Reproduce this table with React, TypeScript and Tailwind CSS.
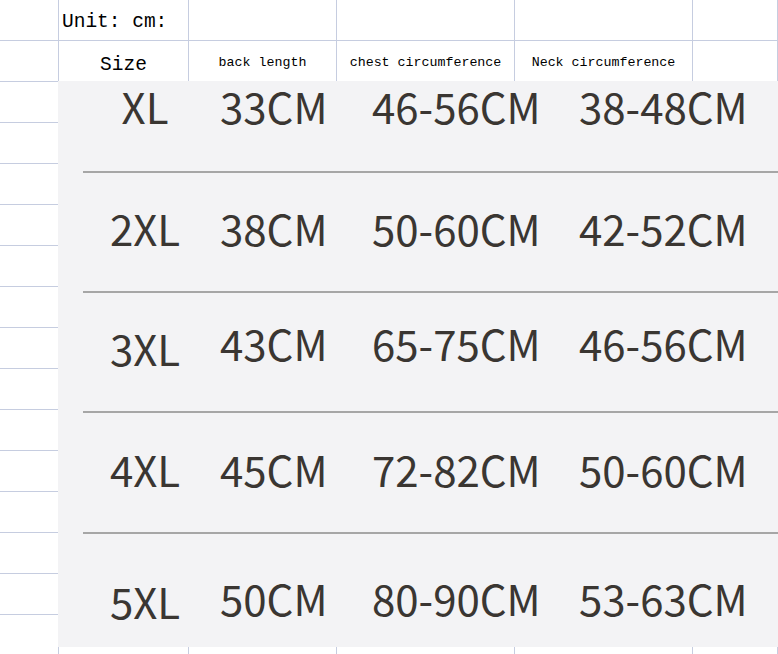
const sizes = [
  { size: "XL", back: "33CM", chest: "46-56CM", neck: "38-48CM", top: "mt-0", sizeShift: "" },
  { size: "2XL", back: "38CM", chest: "50-60CM", neck: "42-52CM", top: "mt-[30px]", sizeShift: "" },
  { size: "3XL", back: "43CM", chest: "65-75CM", neck: "46-56CM", top: "mt-[25px]", sizeShift: "translate-y-[5px]" },
  { size: "4XL", back: "45CM", chest: "72-82CM", neck: "50-60CM", top: "mt-[31px]", sizeShift: "" },
  { size: "5XL", back: "50CM", chest: "80-90CM", neck: "53-63CM", top: "mt-[39px]", sizeShift: "translate-y-[3px]" },
];

const lineGaps = ["mt-[36px]", "mt-[34px]", "mt-[39px]", "mt-[34px]"];

function SheetGrid() {
  const rows = Array.from({ length: 16 }, (_, i) => i);
  const cell = "h-[41px] border-r border-b border-[#c6cde0]";

  return (
    <div className="grid grid-cols-[59px_130px_148px_178px_178px_1fr] font-['Liberation_Mono',monospace] text-black">
      {rows.map((r) => (
        <div key={r} className="contents">
          <div className={cell} />
          <div className={`${cell} flex`}>
            {r === 0 && <span className="pl-[3px] pt-[10px] text-[19.5px] leading-[24px]">Unit: cm:</span>}
            {r === 1 && <span className="w-full pt-[12px] text-center text-[19.5px] leading-[24px]">Size</span>}
          </div>
          <div className={`${cell} flex`}>
            {r === 1 && <span className="w-full pt-[13px] text-center text-[13.3px] leading-[18px]">back length</span>}
          </div>
          <div className={`${cell} flex`}>
            {r === 1 && <span className="w-full pt-[13px] text-center text-[13.3px] leading-[18px]">chest circumference</span>}
          </div>
          <div className={`${cell} flex`}>
            {r === 1 && <span className="w-full pt-[13px] text-center text-[13.3px] leading-[18px]">Neck circumference</span>}
          </div>
          <div className={cell} />
        </div>
      ))}
    </div>
  );
}

function SizeChart() {
  return (
    <div className="absolute left-[58px] top-[81px] flex h-[566px] w-[720px] flex-col bg-[#f3f3f5] font-['Noto_Sans_CJK_SC','Noto_Sans',sans-serif] text-[#3a3632]">
      {sizes.map((s, i) => (
        <div key={s.size} className="flex flex-col">
          <div className={`${s.top} flex h-[54px] items-center pb-[5px] pl-[22px] text-[42px] leading-none`}>
            <span className={`w-[130px] text-center ${s.sizeShift}`}>{s.size}</span>
            <span className="ml-[10px] w-[152px]">{s.back}</span>
            <span className="w-[207px]">{s.chest}</span>
            <span>{s.neck}</span>
          </div>
          {i < 4 && <div className={`${lineGaps[i]} ml-[25px] h-[2px] bg-[#a6a6a6]`} />}
        </div>
      ))}
    </div>
  );
}

export default function App() {
  return (
    <div className="relative h-[654px] w-[778px] overflow-hidden bg-white">
      <SheetGrid />
      <SizeChart />
    </div>
  );
}
